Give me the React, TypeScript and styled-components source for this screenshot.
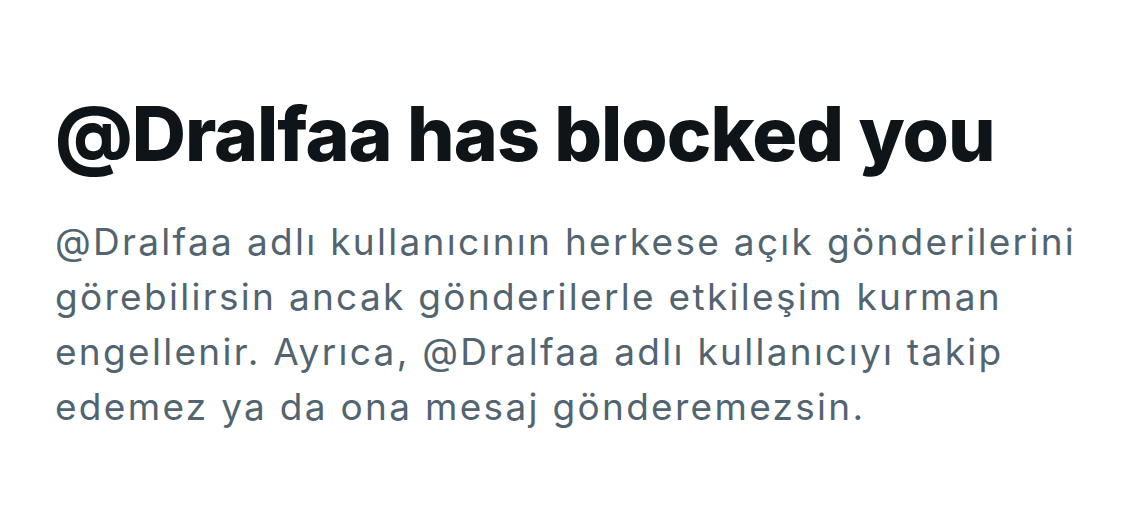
import React from 'react';
import styled, { createGlobalStyle } from 'styled-components';

const GlobalStyle = createGlobalStyle`
    html, body {
        margin: 0;
        padding: 0;
        background: #ffffff;
    }
    body {
        font-family: Inter, "Noto Sans", sans-serif;
    }
`;

const Wrapper = styled.div`
    width: 1137px;
    height: 525px;
    box-sizing: border-box;
    padding: 90px 30px 0 55px;
    display: flex;
    flex-direction: column;
    gap: 36px;
    background: #ffffff;
`;

const Title = styled.h1`
    margin: 0;
    font-size: 75px;
    line-height: 88px;
    font-weight: 800;
    letter-spacing: -1px;
    color: #0f1419;
`;

const Body = styled.p`
    margin: 0;
    max-width: 1045px;
    font-size: 37px;
    line-height: 55px;
    font-weight: 400;
    letter-spacing: 2.3px;
    color: #536471;
`;

const App = () => {
    return (
        <Wrapper>
            <GlobalStyle />
            <Title>@Dralfaa has blocked you</Title>
            <Body>
                @Dralfaa adlı kullanıcının herkese açık gönderilerini görebilirsin ancak gönderilerle etkileşim kurman
                engellenir. Ayrıca, @Dralfaa adlı kullanıcıyı takip edemez ya da ona mesaj gönderemezsin.
            </Body>
        </Wrapper>
    );
};

export default App;
